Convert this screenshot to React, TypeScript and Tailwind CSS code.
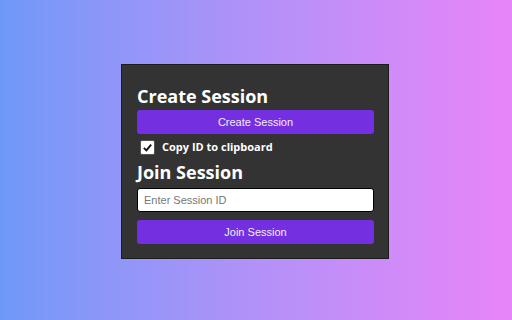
import { useState } from 'react';

export default function App() {
  const [copy, setCopy] = useState(true);
  const [sessionId, setSessionId] = useState('');

  return (
    <div className="w-[512px] h-[320px] flex items-center justify-center bg-gradient-to-r from-[#6e99f8] to-[#e884f8]">
      <div className="w-[268px] h-[195px] mt-[3px] mr-[2px] bg-[#333333] border border-[#1c1c1c] pl-[15px] pr-[14px] pt-[20px] flex flex-col">
        <h2 className="text-[18px] leading-[22px] font-bold text-white font-['Open_Sans',sans-serif]">Create Session</h2>
        <button className="mt-[3px] h-[24px] w-full rounded-[3px] bg-[#7430e0] text-[#f3ecff] text-[11px] font-['Liberation_Sans',Arial,sans-serif]">
          Create Session
        </button>
        <label className="mt-[6px] h-[15px] flex items-center gap-[7px] pl-[3px] cursor-pointer">
          <span
            onClick={() => setCopy((c) => !c)}
            className="w-[15px] h-[15px] bg-white border border-[#555] rounded-[2px] flex items-center justify-center"
          >
            {copy && (
              <svg width="11" height="11" viewBox="0 0 12 12">
                <path d="M2 6.5 L4.8 9.2 L10 2.8" fill="none" stroke="#111" strokeWidth="2" />
              </svg>
            )}
          </span>
          <span className="text-[11px] font-bold text-white font-['Open_Sans',sans-serif]">Copy ID to clipboard</span>
        </label>
        <h2 className="mt-[6px] text-[18px] leading-[22px] font-bold text-white font-['Open_Sans',sans-serif]">Join Session</h2>
        <input
          value={sessionId}
          onChange={(e) => setSessionId(e.target.value)}
          placeholder="Enter Session ID"
          className="mt-[5px] h-[24px] w-full rounded-[3px] bg-white border border-black px-[6px] text-[11px] text-black placeholder:text-[#777] outline-none font-['Liberation_Sans',Arial,sans-serif]"
        />
        <button className="mt-[8px] h-[24px] w-full rounded-[3px] bg-[#7430e0] text-[#f3ecff] text-[11px] font-['Liberation_Sans',Arial,sans-serif]">
          Join Session
        </button>
      </div>
    </div>
  );
}
